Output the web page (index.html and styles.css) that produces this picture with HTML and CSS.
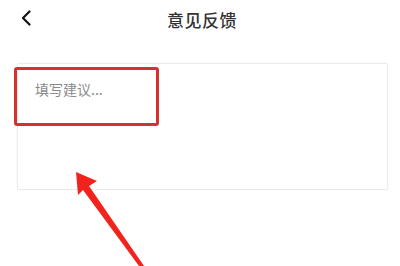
FILE: index.html
```html
<!DOCTYPE html>
<html lang="zh-CN">
<head>
  <meta charset="UTF-8">
  <meta name="viewport" content="width=device-width, initial-scale=1.0">
  <title>意见反馈</title>
  <link rel="stylesheet" href="styles.css">
</head>
<body>
  <header class="nav-bar">
    <span class="back-btn">
      <svg width="10" height="16" viewBox="0 0 10 16">
        <path d="M8.5 1.5 L2 8 L8.5 14.5" fill="none" stroke="#111" stroke-width="2.2" stroke-linecap="round" stroke-linejoin="round"/>
      </svg>
    </span>
    <h1 class="nav-title">意见反馈</h1>
  </header>
  <div class="feedback-box">
    <div class="placeholder">填写建议...</div>
  </div>
  <!-- annotation -->
  <div class="mark-box"></div>
  <svg class="mark-arrow" width="400" height="266" viewBox="0 0 400 266">
    <polygon points="76,172 97,181 89,186 144,266 139,266 83,190 78,195" fill="#f2231d"/>
  </svg>
</body>
</html>
```

FILE: styles.css
```css
body {
  margin: 0;
  background-color: #fff;
  font-family: "Noto Sans CJK SC", "Noto Sans", sans-serif;
  color: #333;
  width: 400px;
  height: 266px;
  overflow: hidden;
  position: relative;
}
.nav-bar {
  height: 38px;
  display: flex;
  align-items: center;
  justify-content: center;
  position: relative;
}
.back-btn {
  position: absolute;
  left: 21px;
  top: 10px;
  display: flex;
}
.nav-title {
  margin: 0;
  font-size: 17px;
  font-weight: 500;
  color: #333;
  padding-left: 4px;
  letter-spacing: 0.5px;
}
.feedback-box {
  margin: 25px 12px 0 17px;
  height: 127px;
  border: 1px solid #ebebeb;
  border-radius: 2px;
  box-shadow: 0 0 2px rgba(0, 0, 0, 0.06);
  box-sizing: border-box;
  padding: 15px 17px;
}
.placeholder {
  font-size: 14px;
  color: #8a8a8a;
}
.mark-box {
  position: absolute;
  left: 14px;
  top: 67px;
  width: 145px;
  height: 59px;
  border: 3px solid #d8302b;
  border-radius: 3px;
  box-sizing: border-box;
}
.mark-arrow {
  position: absolute;
  left: 0;
  top: 0;
}
```
